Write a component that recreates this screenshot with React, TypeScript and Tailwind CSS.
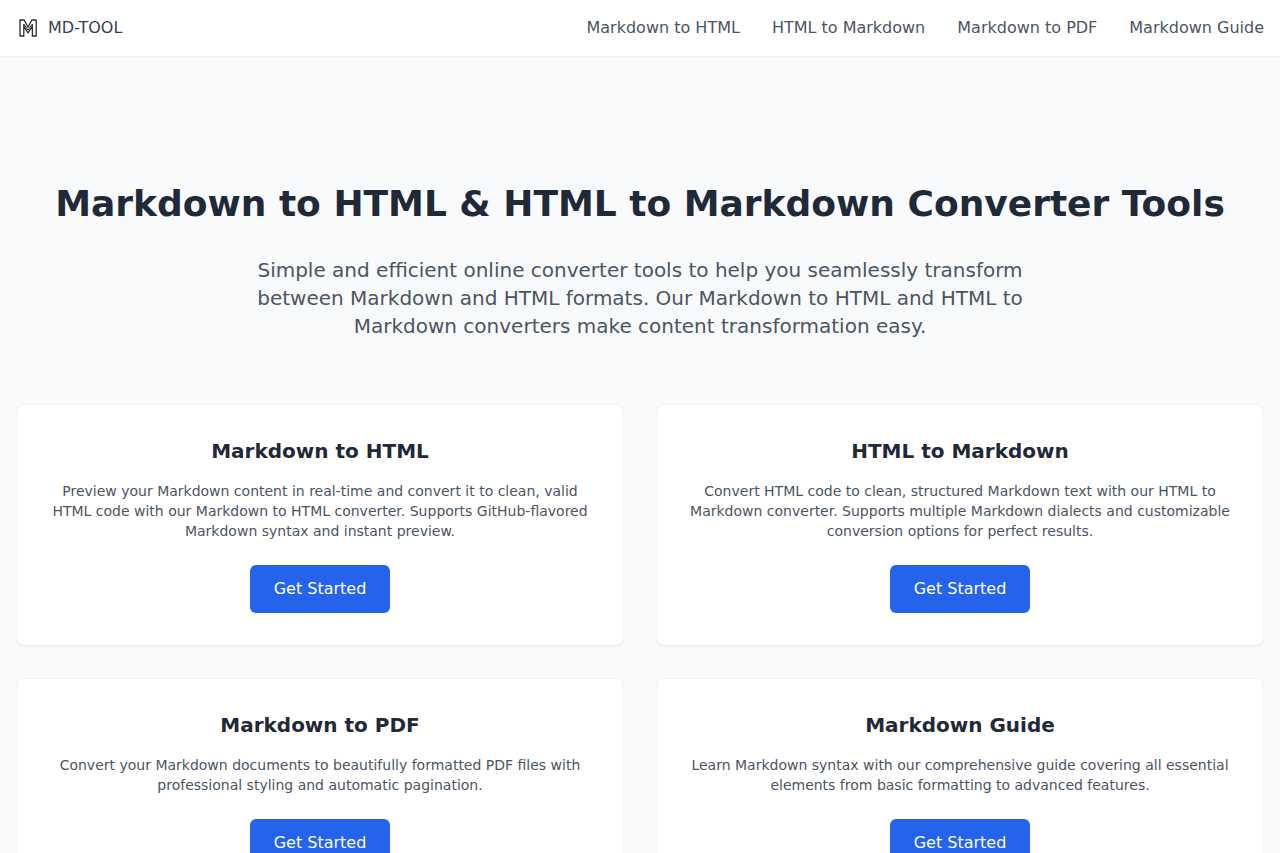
const tools = [
  {
    title: 'Markdown to HTML',
    href: '#markdown-to-html',
    text: 'Preview your Markdown content in real-time and convert it to clean, valid HTML code with our Markdown to HTML converter. Supports GitHub-flavored Markdown syntax and instant preview.',
  },
  {
    title: 'HTML to Markdown',
    href: '#html-to-markdown',
    text: 'Convert HTML code to clean, structured Markdown text with our HTML to Markdown converter. Supports multiple Markdown dialects and customizable conversion options for perfect results.',
  },
  {
    title: 'Markdown to PDF',
    href: '#markdown-to-pdf',
    text: 'Convert your Markdown documents to beautifully formatted PDF files with professional styling and automatic pagination.',
  },
  {
    title: 'Markdown Guide',
    href: '#markdown-guide',
    text: 'Learn Markdown syntax with our comprehensive guide covering all essential elements from basic formatting to advanced features.',
  },
];

function Logo() {
  return (
    <svg
      className="size-6"
      viewBox="0 0 24 24"
      fill="none"
      stroke="#2b2b2b"
      strokeWidth="1.3"
      strokeLinejoin="round"
      aria-hidden="true"
    >
      <path d="M4 4H8.2L12 11.2L15.8 4H20.2V20H16.4V10.2L12 17L7.8 10.2V20H4Z" />
      <path d="M7.8 10.2V8L12 14.2L16.4 8V10.2" strokeWidth="1" />
    </svg>
  );
}

function Header() {
  return (
    <header className="relative bg-white shadow-xs">
      <div className="mx-auto flex h-14 max-w-7xl items-center justify-between px-4">
        <a href="#home" className="flex items-center gap-2 text-[#374151]">
          <Logo />
          <span>MD-TOOL</span>
        </a>
        <nav className="flex gap-8 text-[#4b5563]">
          {tools.map((tool) => (
            <a key={tool.href} href={tool.href} className="hover:text-[#1f2937]">
              {tool.title}
            </a>
          ))}
        </nav>
      </div>
    </header>
  );
}

function ToolCard({ title, href, text }: { title: string; href: string; text: string }) {
  return (
    <article className="rounded-lg border border-[#f3f4f6] bg-white p-8 text-center shadow-xs">
      <h2 className="mb-4 text-xl font-semibold text-[#1f2937]">{title}</h2>
      <p className="mb-6 text-sm text-[#4b5563]">{text}</p>
      <a
        href={href}
        className="inline-block rounded-md bg-[#2563eb] px-6 py-3 align-top text-white hover:bg-[#1d4ed8]"
      >
        Get Started
      </a>
    </article>
  );
}

export default function App() {
  return (
    <div className="min-h-screen bg-[#f9fafb] font-['DejaVu_Sans',sans-serif]">
      <Header />
      <main className="mx-auto max-w-7xl px-4 pt-32 pb-16">
        <section className="mb-16 text-center">
          <h1 className="mb-8 text-4xl font-bold text-[#1f2937]">
            Markdown to HTML &amp; HTML to Markdown Converter Tools
          </h1>
          <p className="mx-auto max-w-3xl text-xl text-[#4b5563]">
            Simple and efficient online converter tools to help you seamlessly transform between
            Markdown and HTML formats. Our Markdown to HTML and HTML to Markdown converters make
            content transformation easy.
          </p>
        </section>
        <section className="grid grid-cols-2 gap-8">
          {tools.map((tool) => (
            <ToolCard key={tool.href} {...tool} />
          ))}
        </section>
      </main>
    </div>
  );
}
